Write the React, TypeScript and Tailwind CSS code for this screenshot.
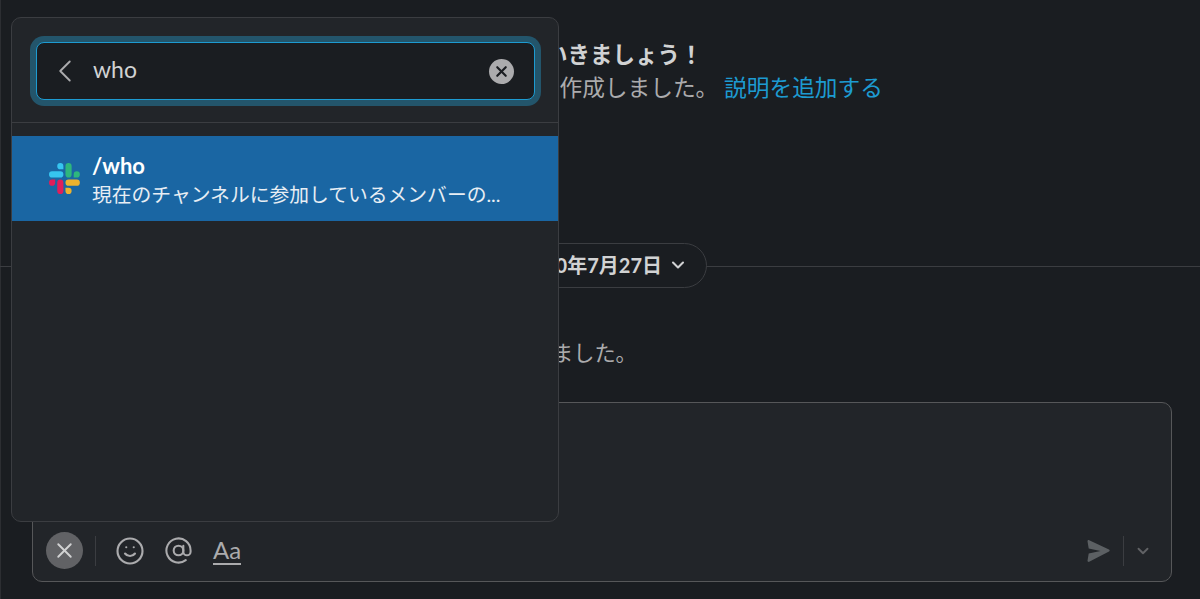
import { AtSign, ChevronDown, ChevronLeft, Smile, X } from "lucide-react";

function SlackLogo() {
  return (
    <svg viewBox="0 0 54 54" className="w-[31px] h-[31px] shrink-0">
      <path d="M19.712.133a5.381 5.381 0 0 0-5.376 5.387 5.381 5.381 0 0 0 5.376 5.386h5.376V5.52A5.381 5.381 0 0 0 19.712.133m0 14.365H5.376A5.381 5.381 0 0 0 0 19.884a5.381 5.381 0 0 0 5.376 5.387h14.336a5.381 5.381 0 0 0 5.376-5.387 5.381 5.381 0 0 0-5.376-5.386" fill="#36C5F0" />
      <path d="M53.76 19.884a5.381 5.381 0 0 0-5.376-5.386 5.381 5.381 0 0 0-5.376 5.386v5.387h5.376a5.381 5.381 0 0 0 5.376-5.387m-14.336 0V5.52A5.381 5.381 0 0 0 34.048.133a5.381 5.381 0 0 0-5.376 5.387v14.364a5.381 5.381 0 0 0 5.376 5.387 5.381 5.381 0 0 0 5.376-5.387" fill="#2EB67D" />
      <path d="M34.048 54a5.381 5.381 0 0 0 5.376-5.387 5.381 5.381 0 0 0-5.376-5.386h-5.376v5.386A5.381 5.381 0 0 0 34.048 54m0-14.365h14.336a5.381 5.381 0 0 0 5.376-5.386 5.381 5.381 0 0 0-5.376-5.387H34.048a5.381 5.381 0 0 0-5.376 5.387 5.381 5.381 0 0 0 5.376 5.386" fill="#ECB22E" />
      <path d="M0 34.249a5.381 5.381 0 0 0 5.376 5.386 5.381 5.381 0 0 0 5.376-5.386v-5.387H5.376A5.381 5.381 0 0 0 0 34.25m14.336-.001v14.364A5.381 5.381 0 0 0 19.712 54a5.381 5.381 0 0 0 5.376-5.387V34.25a5.381 5.381 0 0 0-5.376-5.387 5.381 5.381 0 0 0-5.376 5.387" fill="#E01E5A" />
    </svg>
  );
}

function SendIcon() {
  return (
    <svg viewBox="0 0 24 24" className="w-[24px] h-[24px] text-[#5c6063]" fill="currentColor">
      <path d="M1.5 2.2c0-.9.9-1.4 1.7-1L23 10.6c.9.4.9 1.6 0 2L3.2 22.8c-.8.4-1.7-.2-1.7-1l1.2-7.2 11.8-2.6-11.8-2.6z" />
    </svg>
  );
}

function CommandPopover() {
  return (
    <div className="absolute left-[11px] top-[17px] w-[548px] h-[505px] bg-[#222529] border border-[#3b3d41] rounded-[10px] overflow-hidden">
      {/* search box */}
      <div className="h-[105px] border-b border-[#3b3d41] pt-[24px] pl-[24px] pr-[23px]">
        <div className="h-[58px] flex items-center bg-[#1a1d21] border-[1.5px] border-[#1d9bd1] rounded-[8px] ring-[6px] ring-[#23556b] pl-[9px] pr-[20px]">
          <ChevronLeft className="w-[38px] h-[38px] text-[#ababad] shrink-0" strokeWidth={1.2} />
          <span className="ml-[9px] pb-[4px] flex-1 text-[23px] text-[#d1d2d3] leading-none">who</span>
          <span className="w-[25px] h-[25px] rounded-full bg-[#ababad] flex items-center justify-center">
            <X className="w-[17px] h-[17px] text-[#1a1d21]" strokeWidth={3} />
          </span>
        </div>
      </div>
      {/* result row */}
      <div className="mt-[13px] h-[85px] bg-[#1a66a3] flex items-center pl-[37px]">
        <SlackLogo />
        <div className="ml-[12px] pt-[2px] text-white">
          <div className="text-[22px] font-bold leading-[29px]">/who</div>
          <div className="text-[19.8px] leading-[29px] text-[#e8eef4] whitespace-nowrap">現在のチャンネルに参加しているメンバーの...</div>
        </div>
      </div>
    </div>
  );
}

export default function App() {
  return (
    <div
      className="relative w-[1200px] h-[599px] overflow-hidden bg-[#1a1d21] flex flex-col"
      style={{ fontFamily: "Lato, 'Noto Sans CJK JP', sans-serif" }}
    >
      <div className="absolute inset-y-0 left-0 w-px bg-[#2c2e32]" />

      {/* channel intro */}
      <div className="h-[242px] pt-[40px]">
        <div className="pl-[410px] text-[22.5px] font-bold leading-[30px] text-[#d1d2d3] whitespace-nowrap">会話を始めていきましょう！</div>
        <div className="pl-[424px] text-[22.7px] leading-[36px] text-[#ababad] whitespace-nowrap">
          チャンネルを作成しました。 <span className="text-[#1d9bd1]">説明を追加する</span>
        </div>
      </div>

      {/* date divider */}
      <div className="relative h-[46px] flex items-center justify-center">
        <div className="absolute inset-x-0 top-[24px] h-px bg-[#3b3d41]" />
        <div className="relative w-[214px] h-[45px] pr-[18px] flex items-center justify-end gap-[6px] rounded-full border border-[#3b3d41] bg-[#1a1d21] text-[20px] font-bold text-[#d1d2d3] whitespace-nowrap">
          2020年7月27日
          <ChevronDown className="w-[20px] h-[20px]" strokeWidth={2.5} />
        </div>
      </div>

      {/* join message */}
      <div className="h-[114px] pl-[362px] pt-[47px] text-[21.2px] leading-[36px] text-[#ababad] whitespace-nowrap">
        チャンネルに参加しました。
      </div>

      {/* composer */}
      <div className="ml-[32px] w-[1140px] h-[180px] bg-[#222529] border border-[#565759] rounded-[10px] flex flex-col justify-end">
        <div className="h-[61px] flex items-center pl-[13px] pr-[19px]">
          <span className="w-[37px] h-[37px] rounded-full bg-[#616265] flex items-center justify-center">
            <X className="w-[25px] h-[25px] text-[#d1d2d3]" strokeWidth={1.8} />
          </span>
          <span className="ml-[12px] w-px h-[30px] bg-[#3b3d41]" />
          <Smile className="ml-[19px] w-[30px] h-[30px] text-[#ababad]" strokeWidth={1.7} />
          <AtSign className="ml-[19px] w-[29px] h-[29px] text-[#ababad]" strokeWidth={1.7} />
          <span className="ml-[20px] text-[24px] leading-[27px] text-[#ababad] border-b-2 border-[#ababad]">Aa</span>
          <span className="ml-auto flex items-center">
            <SendIcon />
            <span className="ml-[13px] w-px h-[30px] bg-[#3b3d41]" />
            <ChevronDown className="ml-[10px] w-[18px] h-[18px] text-[#616265]" strokeWidth={2.5} />
          </span>
        </div>
      </div>
      <div className="h-[17px] shrink-0" />

      <CommandPopover />
    </div>
  );
}
